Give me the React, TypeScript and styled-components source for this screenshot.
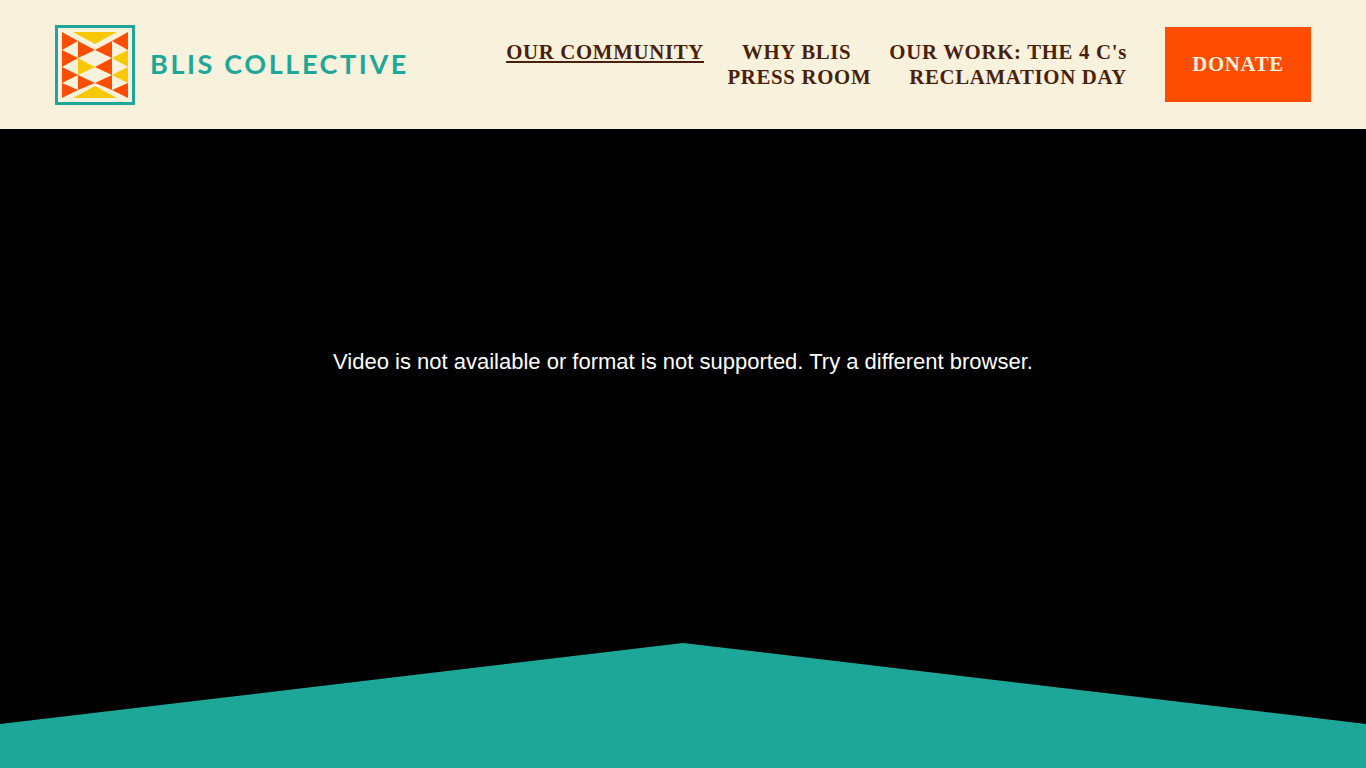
import React from 'react';
import styled, { createGlobalStyle } from 'styled-components';

const GlobalStyle = createGlobalStyle`
    html, body {
        margin: 0;
        padding: 0;
        height: 100%;
        overflow: hidden;
        background: #000;
    }
    * {
        box-sizing: border-box;
    }
`;

const Page = styled.div`
    display: flex;
    flex-direction: column;
    height: 768px;
`;

const Header = styled.header`
    display: flex;
    align-items: center;
    justify-content: space-between;
    height: 129px;
    padding: 0 55px;
    background-color: #f8f1dc;
`;

const LogoLink = styled.a`
    display: flex;
    align-items: center;
    gap: 15px;
    text-decoration: none;
`;

const LogoText = styled.span`
    padding-bottom: 2px;
    font-family: Lato, sans-serif;
    font-size: 27px;
    font-weight: 700;
    letter-spacing: 2.6px;
    white-space: nowrap;
    color: #1da798;
`;

const HeaderRight = styled.div`
    display: flex;
    align-items: center;
    gap: 38px;
`;

const Nav = styled.nav`
    display: flex;
    flex-wrap: wrap;
    justify-content: flex-end;
    column-gap: 38px;
    width: 640px;
    padding-bottom: 2px;
`;

const NavLink = styled.a<{ $active?: boolean }>`
    font-family: "Liberation Serif", "Times New Roman", serif;
    font-size: 20.8px;
    font-weight: 700;
    line-height: 25px;
    letter-spacing: 0.69px;
    white-space: nowrap;
    color: #4a1f0b;
    text-decoration: ${(p) => (p.$active ? 'underline' : 'none')};
`;

const DonateButton = styled.a`
    display: flex;
    align-items: center;
    justify-content: center;
    width: 146px;
    height: 75px;
    padding-bottom: 2px;
    font-family: "Liberation Serif", "Times New Roman", serif;
    font-size: 20.8px;
    font-weight: 700;
    letter-spacing: 0.69px;
    color: #f8f1dc;
    background-color: #ff4d00;
`;

const Hero = styled.section`
    position: relative;
    flex: 1;
    display: flex;
    align-items: center;
    justify-content: center;
    padding-bottom: 174px;
    background-color: #000;
`;

const VideoMessage = styled.p`
    margin: 0;
    font-family: "Liberation Sans", Arial, sans-serif;
    font-size: 22px;
    line-height: 30px;
    color: #fff;
`;

const Wedge = styled.div`
    position: absolute;
    left: 0;
    right: 0;
    bottom: 0;
    height: 125px;
    background-color: #1da798;
    clip-path: polygon(0 81px, 50% 0, 100% 81px, 100% 100%, 0 100%);
`;

const navItems = [
    { label: 'OUR COMMUNITY', active: true },
    { label: 'WHY BLIS' },
    { label: "OUR WORK: THE 4 C's" },
    { label: 'PRESS ROOM' },
    { label: 'RECLAMATION DAY' },
];

const ORANGE = '#ff4d00';
const YELLOW = '#f8c800';

// triangles of the quilt, in the logo's 80x80 box
const quilt: [string, string][] = [
    ['18,7 62,7 40,19', YELLOW],
    ['18,73 62,73 40,61', YELLOW],
    // left column
    ['7,7 7,25 23,16', ORANGE],
    ['7,25 7,42 23,33', ORANGE],
    ['7,42 7,58 23,50', ORANGE],
    ['7,58 7,73 23,65', ORANGE],
    // inner columns
    ['23,16 23,33 40,25', ORANGE],
    ['23,33 23,50 40,42', YELLOW],
    ['23,50 23,65 40,58', ORANGE],
    ['57,16 57,33 40,25', ORANGE],
    ['57,33 57,50 40,42', ORANGE],
    ['57,50 57,65 40,58', ORANGE],
    // right column
    ['73,7 73,25 57,16', ORANGE],
    ['73,25 73,42 57,33', YELLOW],
    ['73,42 73,58 57,50', YELLOW],
    ['73,58 73,73 57,65', ORANGE],
];

const LogoMark = () => (
    <svg width="80" height="80" viewBox="0 0 80 80" aria-hidden="true">
        <rect x="1.5" y="1.5" width="77" height="77" fill="#f8f1dc" stroke="#1da798" strokeWidth="3" />
        {quilt.map(([points, fill]) => (
            <polygon key={points} points={points} fill={fill} />
        ))}
    </svg>
);

const App = () => {
    return (
        <Page>
            <GlobalStyle />
            <Header>
                <LogoLink>
                    <LogoMark />
                    <LogoText>BLIS COLLECTIVE</LogoText>
                </LogoLink>
                <HeaderRight>
                    <Nav>
                        {navItems.map((item) => (
                            <NavLink key={item.label} $active={item.active}>
                                {item.label}
                            </NavLink>
                        ))}
                    </Nav>
                    <DonateButton>DONATE</DonateButton>
                </HeaderRight>
            </Header>
            <Hero>
                <VideoMessage>Video is not available or format is not supported. Try a different browser.</VideoMessage>
                <Wedge />
            </Hero>
        </Page>
    );
};

export default App;
